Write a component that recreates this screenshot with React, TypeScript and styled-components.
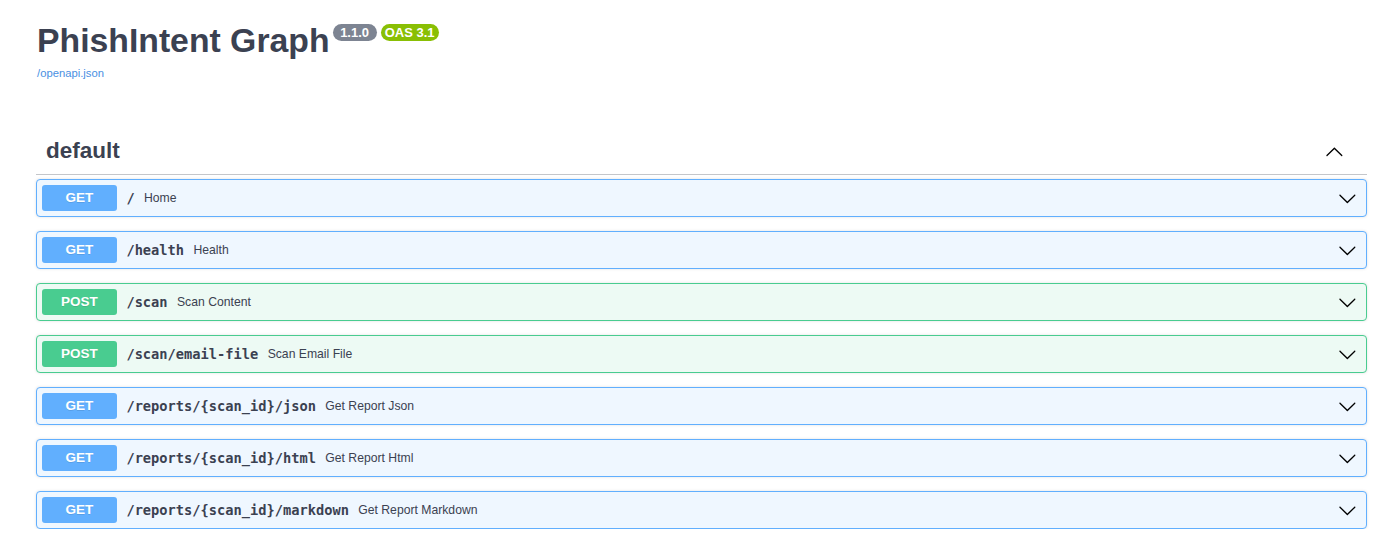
import React from "react";
import styled, { createGlobalStyle } from "styled-components";

const Global = createGlobalStyle`
  html, body { margin: 0; padding: 0; background: #ffffff; }
  body { font-family: "Liberation Sans", Arial, sans-serif; color: #3b4151; }
  * { box-sizing: border-box; }
`;

const Page = styled.div`
  padding: 21px 27px 0 36px;
`;

const Info = styled.hgroup`
  display: block;
  margin: 0;
`;

const TitleRow = styled.h2`
  display: flex;
  align-items: flex-start;
  margin: 0;
  height: 39px;
  font-size: 33.75px;
  line-height: 39px;
  font-weight: 700;
  color: #3b4151;
  font-family: "Liberation Sans", Arial, sans-serif;
`;

const TitleText = styled.span`
  margin-left: 1px;
`;

const Badges = styled.div`
  display: flex;
  gap: 4px;
  margin: 3px 0 0 3px;
`;

const Badge = styled.small<{ $bg: string }>`
  display: inline-block;
  background: ${(p) => p.$bg};
  color: #ffffff;
  border-radius: 57px;
  padding: 0 4px;
  height: 17px;
  line-height: 17px;
  font-size: 13px;
  font-weight: 700;
  white-space: pre;
  font-family: "Liberation Sans", Arial, sans-serif;
`;

const SpecLink = styled.a`
  display: inline-block;
  margin: 7px 0 0 1px;
  font-size: 11.25px;
  line-height: 13px;
  color: #4990e2;
  text-decoration: none;
`;

const Section = styled.section`
  margin-top: 48px;
`;

const TagHeader = styled.div`
  display: flex;
  align-items: center;
  justify-content: space-between;
  padding: 9px 23px 10px 10px;
  border-bottom: 1px solid rgba(59, 65, 81, 0.3);
`;

const TagTitle = styled.h3`
  margin: 0;
  font-size: 22.5px;
  line-height: 26px;
  font-weight: 700;
  color: #3b4151;
`;

const Ops = styled.div`
  display: flex;
  flex-direction: column;
  gap: 14px;
  margin-top: 4px;
`;

const Op = styled.div<{ $color: string; $bg: string }>`
  display: flex;
  align-items: center;
  height: 38px;
  padding: 5px 9px 5px 5px;
  border: 1px solid ${(p) => p.$color};
  background: ${(p) => p.$bg};
  border-radius: 4px;
  box-shadow: 0 0 3px rgba(0, 0, 0, 0.12);
`;

const Method = styled.span<{ $color: string }>`
  flex: none;
  width: 75px;
  height: 26px;
  line-height: 26px;
  text-align: center;
  border-radius: 3px;
  background: ${(p) => p.$color};
  color: #ffffff;
  font-size: 13.5px;
  font-weight: 700;
  text-shadow: 0 1px 0 rgba(0, 0, 0, 0.1);
`;

const Path = styled.span`
  padding: 0 9.4px;
  font-family: "DejaVu Sans Mono", "Liberation Mono", monospace;
  font-size: 13.7px;
  font-weight: 700;
  color: #3b4151;
`;

const Desc = styled.span`
  font-size: 12.2px;
  color: #3b4151;
`;

const Arrow = styled.svg`
  flex: none;
  width: 18.75px;
  height: 18.75px;
  margin-left: auto;
  fill: #000000;
`;

const DOWN =
  "M17.418 6.109c.272-.268.709-.268.979 0s.271.701 0 .969l-7.908 7.83c-.27.268-.707.268-.979 0l-7.908-7.830c-.27-.268-.27-.701 0-.969.271-.268.709-.268.979 0L10 13.25l7.418-7.141z";
const UP =
  "M17.418 14.908c.272.268.709.268.979 0s.271-.701 0-.969l-7.908-7.83c-.27-.268-.707-.268-.979 0l-7.908 7.83c-.27.268-.27.701 0 .969.271.268.709.268.979 0L10 7.767l7.418 7.141z";

const GET = { color: "#61affe", bg: "#eff7ff" };
const POST = { color: "#49cc90", bg: "#edfaf4" };

const ops = [
  { m: "GET", path: "/", desc: "Home" },
  { m: "GET", path: "/health", desc: "Health" },
  { m: "POST", path: "/scan", desc: "Scan Content" },
  { m: "POST", path: "/scan/email-file", desc: "Scan Email File" },
  { m: "GET", path: "/reports/{scan_id}/json", desc: "Get Report Json" },
  { m: "GET", path: "/reports/{scan_id}/html", desc: "Get Report Html" },
  { m: "GET", path: "/reports/{scan_id}/markdown", desc: "Get Report Markdown" },
];

export default function App() {
  return (
    <>
      <Global />
      <Page>
        <Info>
          <TitleRow>
            <TitleText>PhishIntent Graph</TitleText>
            <Badges>
              <Badge $bg="#7d8492"> 1.1.0 </Badge>
              <Badge $bg="#89bf04">OAS 3.1</Badge>
            </Badges>
          </TitleRow>
          <SpecLink href="#">/openapi.json</SpecLink>
        </Info>
        <Section>
          <TagHeader>
            <TagTitle>default</TagTitle>
            <Arrow viewBox="0 0 20 20">
              <path d={UP} />
            </Arrow>
          </TagHeader>
          <Ops>
            {ops.map((o) => {
              const c = o.m === "GET" ? GET : POST;
              return (
                <Op key={o.path} $color={c.color} $bg={c.bg}>
                  <Method $color={c.color}>{o.m}</Method>
                  <Path>{o.path}</Path>
                  <Desc>{o.desc}</Desc>
                  <Arrow viewBox="0 0 20 20">
                    <path d={DOWN} />
                  </Arrow>
                </Op>
              );
            })}
          </Ops>
        </Section>
      </Page>
    </>
  );
}
